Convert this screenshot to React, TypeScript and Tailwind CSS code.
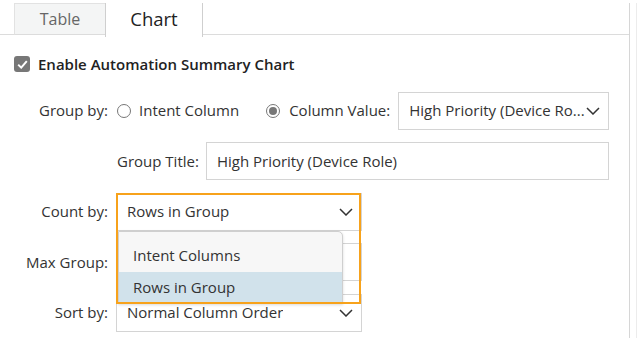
import React from 'react';

const Chevron: React.FC = () => (
  <svg width="14" height="8" viewBox="0 0 14 8" fill="none" className="shrink-0">
    <path d="M1 1l6 6 6-6" stroke="#333" strokeWidth="1.5" />
  </svg>
);

const Select: React.FC<{ value: string; className?: string }> = ({ value, className }) => (
  <div
    className={`h-[38px] flex items-center justify-between pl-[10px] pr-[8px] border border-[#d4d4d4] bg-white ${className || ''}`}
  >
    <span className="whitespace-nowrap overflow-hidden">{value}</span>
    <Chevron />
  </div>
);

const App: React.FC = () => {
  return (
    <div className="w-[640px] h-[338px] bg-white overflow-hidden pt-[3px] flex font-['Open_Sans',sans-serif] text-[15px] text-[#333]">
      <div className="w-[630px] h-full border-r border-[#d6d6d6] flex flex-col">
        {/* tabs */}
        <div className="h-[32px] flex shrink-0">
          <div className="w-[14px] border-b border-[#dcdcdc]" />
          <div className="w-[91px] bg-[#f4f5f5] border-l border-t border-[#e2e2e2] border-b border-b-[#dcdcdc] flex items-center justify-center text-[16px] text-[#666]">
            Table
          </div>
          <div className="w-[98px] h-[34px] bg-white border-l border-r border-[#cfcfcf] flex items-center justify-center text-[18.5px] text-[#222] pb-[2px]">
            Chart
          </div>
          <div className="flex-1 border-b border-[#dcdcdc]" />
        </div>

        {/* enable checkbox */}
        <div className="flex items-center gap-[8px] pl-[14px] mt-[18px]">
          <div className="w-[16px] h-[16px] rounded-[3px] bg-[#777] flex items-center justify-center">
            <svg width="11" height="9" viewBox="0 0 11 9" fill="none">
              <path d="M1.2 4.6l3 3 5.6-6.4" stroke="#fff" strokeWidth="2" />
            </svg>
          </div>
          <span className="font-semibold text-[15px] text-[#222]">Enable Automation Summary Chart</span>
        </div>

        {/* form */}
        <div className="flex flex-col gap-[12.5px] mt-[16px] w-[609px]">
          <div className="flex items-center h-[38px]">
            <div className="w-[109px] text-right pr-[1px]">Group by:</div>
            <div className="flex items-center ml-[8px]">
              <span className="w-[14px] h-[14px] rounded-full border border-[#777] bg-white" />
              <span className="ml-[8px]">Intent Column</span>
              <span className="ml-[27px] w-[14px] h-[14px] rounded-full border border-[#777] bg-white flex items-center justify-center">
                <span className="w-[8px] h-[8px] rounded-full bg-[#777]" />
              </span>
              <span className="ml-[9px]">Column Value:</span>
            </div>
            <Select value="High Priority (Device Ro..." className="ml-[8px] flex-1" />
          </div>

          <div className="flex items-center h-[38px] pl-[117px]">
            <span className="whitespace-nowrap">Group Title:</span>
            <div className="ml-[7px] flex-1 h-[38px] border border-[#d4d4d4] flex items-center pl-[10px]">
              High Priority (Device Role)
            </div>
          </div>

          <div className="flex items-center h-[38px]">
            <div className="w-[109px] text-right pr-[1px]">Count by:</div>
            <div className="relative ml-[7px] w-[246px] z-10">
              <Select value="Rows in Group" />
              <div className="absolute left-[2px] top-[38px] w-[225px] h-[73px] bg-[#f7f7f7] border border-[#cfcfcf] rounded-tr-[5px] shadow-[0_1px_3px_rgba(0,0,0,0.15)] flex flex-col pt-[8px]">
                <div className="h-[32px] flex items-center pl-[14px]">Intent Columns</div>
                <div className="h-[31px] flex items-center pl-[14px] bg-[#d1e2eb]">Rows in Group</div>
              </div>
              <div className="absolute left-0 top-0 w-[245px] h-[111px] border-2 border-[#f7a21b] pointer-events-none" />
            </div>
          </div>

          <div className="flex items-center h-[38px]">
            <div className="w-[109px] text-right pr-[1px]">Max Group:</div>
            <div className="ml-[7px] w-[246px] h-[38px] border border-[#d4d4d4]" />
          </div>

          <div className="flex items-center h-[38px]">
            <div className="w-[109px] text-right pr-[1px]">Sort by:</div>
            <Select value="Normal Column Order" className="ml-[7px] w-[246px]" />
          </div>
        </div>
      </div>
      <div className="ml-[6px] h-full border-l border-[#ececec]" />
    </div>
  );
};

export default App;
